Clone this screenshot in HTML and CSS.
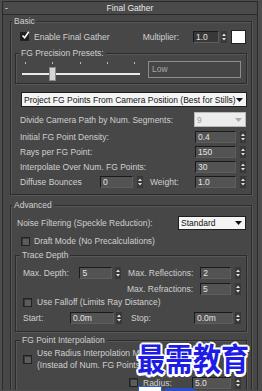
FILE: index.html
```html
<!DOCTYPE html>
<html lang="en">
<head>
    <meta charset="UTF-8">
    <title>Final Gather</title>
    <meta name="viewport" content="width=device-width, initial-scale=1.0">
    <link rel="stylesheet" href="styles.css">
</head>
<body>
    <div class="rollout">
        <div class="title"><span class="toggle">-</span><span>Final Gather</span><span></span></div>

        <fieldset class="group basic">
            <legend>Basic</legend>
            <div class="row enable-row">
                <span class="check checked"><svg viewBox="0 0 9 9"><path d="M1.5 4.5 3.6 6.8 7.8 0.8" fill="none" stroke="#fff" stroke-width="1.6"/></svg></span>
                <span class="check-text">Enable Final Gather</span>
                <span class="mult-label">Multiplier:</span>
                <span class="field mult">1.0</span>
                <svg class="arrows" viewBox="0 0 6 12"><rect width="6" height="12" fill="#383838"/><path d="M1 5h4L3 2.5z M1 7h4L3 9.5z" fill="#e0e0e0"/></svg>
                <span class="swatch"></span>
            </div>

            <fieldset class="group presets">
                <legend>FG Precision Presets:</legend>
                <div class="preset-row">
                    <div class="slider">
                        <div class="ticks"><i></i><i></i><i></i><i></i><i></i></div>
                        <div class="track"></div>
                        <div class="thumb"></div>
                    </div>
                    <div class="preset-name">Low</div>
                </div>
            </fieldset>

            <div class="select wide">
                <span>Project FG Points From Camera Position (Best for Stills)</span>
                <svg class="caret" viewBox="0 0 7 4"><path d="M0 0h7L3.5 4z" fill="#111"/></svg>
            </div>

            <div class="row divide-row">
                <span class="label">Divide Camera Path by Num. Segments:</span>
                <div class="select disabled">
                    <span>9</span>
                    <svg class="caret" viewBox="0 0 7 4"><path d="M0 0h7L3.5 4z" fill="#aaa"/></svg>
                </div>
            </div>

            <div class="row num-row first">
                <span class="label">Initial FG Point Density:</span>
                <span class="field num">0.4</span>
                <svg class="arrows" viewBox="0 0 6 12"><rect width="6" height="12" fill="#383838"/><path d="M1 5h4L3 2.5z M1 7h4L3 9.5z" fill="#e0e0e0"/></svg>
            </div>
            <div class="row num-row">
                <span class="label">Rays per FG Point:</span>
                <span class="field num">150</span>
                <svg class="arrows" viewBox="0 0 6 12"><rect width="6" height="12" fill="#383838"/><path d="M1 5h4L3 2.5z M1 7h4L3 9.5z" fill="#e0e0e0"/></svg>
            </div>
            <div class="row num-row">
                <span class="label">Interpolate Over Num. FG Points:</span>
                <span class="field num">30</span>
                <svg class="arrows" viewBox="0 0 6 12"><rect width="6" height="12" fill="#383838"/><path d="M1 5h4L3 2.5z M1 7h4L3 9.5z" fill="#e0e0e0"/></svg>
            </div>
            <div class="row num-row">
                <span class="label bounces">Diffuse Bounces</span>
                <span class="field small">0</span>
                <svg class="arrows" viewBox="0 0 6 12"><rect width="6" height="12" fill="#383838"/><path d="M1 5h4L3 2.5z M1 7h4L3 9.5z" fill="#e0e0e0"/></svg>
                <span class="label weight">Weight:</span>
                <span class="field num">1.0</span>
                <svg class="arrows" viewBox="0 0 6 12"><rect width="6" height="12" fill="#383838"/><path d="M1 5h4L3 2.5z M1 7h4L3 9.5z" fill="#e0e0e0"/></svg>
            </div>
        </fieldset>

        <fieldset class="group advanced">
            <legend>Advanced</legend>
            <div class="row noise-row">
                <span class="label">Noise Filtering (Speckle Reduction):</span>
                <div class="select noise">
                    <span>Standard</span>
                    <svg class="caret" viewBox="0 0 7 4"><path d="M0 0h7L3.5 4z" fill="#111"/></svg>
                </div>
            </div>
            <div class="row draft-row">
                <span class="check"></span>
                <span class="check-text">Draft Mode (No Precalculations)</span>
            </div>

            <fieldset class="group inner trace">
                <legend>Trace Depth</legend>
                <div class="row depth-row">
                    <span class="label depth-label">Max. Depth:</span>
                    <span class="field depth">5</span>
                    <svg class="arrows" viewBox="0 0 6 12"><rect width="6" height="12" fill="#383838"/><path d="M1 5h4L3 2.5z M1 7h4L3 9.5z" fill="#e0e0e0"/></svg>
                    <span class="label refl-label">Max. Reflections:</span>
                    <span class="field refl">2</span>
                    <svg class="arrows" viewBox="0 0 6 12"><rect width="6" height="12" fill="#383838"/><path d="M1 5h4L3 2.5z M1 7h4L3 9.5z" fill="#e0e0e0"/></svg>
                </div>
                <div class="row depth-row second">
                    <span class="label refl-label">Max. Refractions:</span>
                    <span class="field refl">5</span>
                    <svg class="arrows" viewBox="0 0 6 12"><rect width="6" height="12" fill="#383838"/><path d="M1 5h4L3 2.5z M1 7h4L3 9.5z" fill="#e0e0e0"/></svg>
                </div>
                <div class="row falloff-row">
                    <span class="check"></span>
                    <span class="check-text">Use Falloff (Limits Ray Distance)</span>
                </div>
                <div class="row start-row">
                    <span class="label start-label">Start:</span>
                    <span class="field start">0.0m</span>
                    <svg class="arrows" viewBox="0 0 6 12"><rect width="6" height="12" fill="#383838"/><path d="M1 5h4L3 2.5z M1 7h4L3 9.5z" fill="#e0e0e0"/></svg>
                    <span class="label stop-label">Stop:</span>
                    <span class="field stop">0.0m</span>
                    <svg class="arrows" viewBox="0 0 6 12"><rect width="6" height="12" fill="#383838"/><path d="M1 5h4L3 2.5z M1 7h4L3 9.5z" fill="#e0e0e0"/></svg>
                </div>
            </fieldset>

            <fieldset class="group inner interp">
                <legend>FG Point Interpolation</legend>
                <div class="row radius-method">
                    <span class="check"></span>
                    <span class="check-text two-line">Use Radius Interpolation Method<br>(Instead of Num. FG Points)</span>
                </div>
                <div class="row radius-row">
                    <span class="check"></span>
                    <span class="check-text">Radius:</span>
                    <span class="field stop">5.0</span>
                    <svg class="arrows" viewBox="0 0 6 12"><rect width="6" height="12" fill="#383838"/><path d="M1 5h4L3 2.5z M1 7h4L3 9.5z" fill="#e0e0e0"/></svg>
                </div>
            </fieldset>
        </fieldset>
    </div>

    <!-- watermark over the panel -->
    <div class="watermark">最需教育</div>
    <div class="watermark-foot"><span class="foot-box"></span><span class="foot-bar"></span></div>
</body>
</html>
```

FILE: styles.css
```css
body {
    margin: 0;
    height: 391px;
    overflow: hidden;
    position: relative;
    background: #4d4d4d;
    font-family: 'Liberation Sans', Arial, sans-serif;
    font-size: 8.5px;
    color: #d0d0d0;
}
.rollout {
    margin: 1px 0 0 2px;
    width: 254px;
    height: 388px;
    overflow: hidden;
    border: 1px solid #2a2a2a;
    border-bottom: none;
    background: #474747;
}
.title {
    display: grid;
    grid-template-columns: 10px 1fr 10px;
    height: 12px;
    line-height: 12px;
    border-bottom: 1px solid #2a2a2a;
    background: #4a4a4a;
    text-align: center;
    color: #e8e8e8;
}
.toggle {
    text-align: left;
    padding-left: 2px;
}
/* group boxes */
fieldset.group {
    min-width: 0;
    margin: 1px 5px 0 7px;
    padding: 0 4px 6px 4px;
    border: 1px solid #2c2c2c;
    box-shadow: inset 1px 1px 0 #575757, 1px 1px 0 #575757;
}
fieldset.group legend {
    height: 10px;
    line-height: 10px;
    padding: 0 2px;
    margin-left: -3px;
    background: #474747;
}
fieldset.advanced {
    margin-top: 5px;
    padding-bottom: 20px;
}
fieldset.presets {
    margin: 5px 0 0 0;
    padding: 2px 5px 0 6px;
}
fieldset.inner {
    margin: 4px 0 0 0;
    padding: 0 5px 7px 7px;
}
fieldset.interp {
    margin-top: 3px;
}
.row {
    display: flex;
    align-items: center;
    padding: 0 1px 0 5px;
}
.label {
    white-space: nowrap;
}
.check {
    width: 7px;
    height: 7px;
    flex: none;
    border: 1px solid #222;
    background: #5c5c5c;
    box-shadow: inset 1px 1px 0 #3a3a3a;
}
.check.checked {
    background: #1c1c1c;
    box-shadow: none;
}
.check svg {
    display: block;
    width: 9px;
    height: 9px;
    margin: -2px 0 0 0;
}
.check-text {
    margin-left: 5px;
    white-space: nowrap;
}
.field {
    height: 10px;
    line-height: 10px;
    padding-left: 2px;
    border-top: 1px solid #1a1a1a;
    border-left: 1px solid #1a1a1a;
    border-bottom: 1px solid #5e5e5e;
    border-right: 1px solid #5e5e5e;
    background: #535353;
    color: #e4e4e4;
    box-sizing: content-box;
}
.arrows {
    width: 6px;
    height: 12px;
    flex: none;
    margin-left: 4px;
}
/* basic section */
.enable-row {
    margin-top: 4px;
    height: 13px;
}
.mult-label {
    margin-left: auto;
}
.field.mult {
    width: 22px;
    margin-left: 14px;
    background: #383838;
}
.enable-row .arrows {
    margin-left: 2px;
}
.swatch {
    width: 13px;
    height: 12px;
    margin-left: 4px;
    background: #fff;
    border: 1px solid #222;
}
.preset-row {
    display: flex;
    height: 23px;
}
.slider {
    position: relative;
    width: 118px;
    flex: none;
}
.ticks {
    display: flex;
    justify-content: space-between;
    margin-top: 2px;
    padding: 0 5px 0 3px;
    height: 2px;
}
.ticks i {
    width: 1px;
    height: 2px;
    background: #bdbdbd;
}
.track {
    margin-top: 9px;
    height: 2px;
    background: #eaeaea;
}
.thumb {
    position: absolute;
    left: 27px;
    top: 7px;
    width: 5px;
    height: 12px;
    background: #d6d6d6;
    border: 1px solid #8a8a8a;
}
.preset-name {
    width: 90px;
    height: 15px;
    line-height: 15px;
    margin: 1px 0 0 8px;
    padding-left: 3px;
    border: 1px solid #8c8c8c;
    background: #464646;
    color: #a8a8a8;
}
.select {
    display: flex;
    align-items: center;
    justify-content: space-between;
    border: 1px solid #1e1e1e;
    background: #f4f4f4;
    color: #111;
    padding: 0 3px 0 2px;
    white-space: nowrap;
}
.select.wide {
    height: 13px;
    margin: 8px 0 0 6px;
}
.caret {
    width: 7px;
    height: 4px;
    flex: none;
}
.divide-row {
    margin-top: 5px;
    height: 15px;
    justify-content: space-between;
}
.select.disabled {
    width: 45px;
    height: 13px;
    border-color: #b9b9b9;
    background: #ececec;
    color: #9a9a9a;
}
.num-row {
    height: 12px;
    margin-top: 3px;
}
.num-row.first {
    margin-top: 4px;
}
.num-row .field.num {
    width: 37px;
    margin-left: auto;
}
.label.bounces {
    width: 80px;
}
.field.small {
    width: 29px;
}
.label.weight {
    margin-left: 7px;
}
/* advanced section */
.noise-row {
    margin-top: 6px;
    height: 14px;
    padding-left: 2px;
    justify-content: space-between;
}
.select.noise {
    width: 61px;
    height: 12px;
}
.draft-row {
    margin-top: 6px;
    height: 10px;
    padding-left: 6px;
}
.draft-row .check-text {
    margin-left: 4px;
}
.inner .row {
    padding: 0;
}
.depth-row {
    height: 12px;
    margin-top: 7px;
}
.depth-row.second {
    margin-top: 4px;
    justify-content: flex-end;
}
.depth-label {
    width: 57px;
}
.field.depth {
    width: 29px;
}
.depth-row .arrows {
    margin-left: 3px;
}
.refl-label {
    margin-left: 7px;
    width: 73px;
}
.depth-row .field.refl {
    width: 27px;
}
.depth-row .field.refl + .arrows {
    margin-left: 4px;
}
.falloff-row {
    margin-top: 2px;
    height: 10px;
}
.start-row {
    margin-top: 5px;
    height: 12px;
}
.start-label {
    width: 47px;
}
.field.start {
    width: 40px;
}
.start-row .arrows {
    margin-left: 2px;
}
.stop-label {
    margin-left: 9px;
}
.field.stop {
    width: 35px;
    margin-left: auto;
}
.radius-method {
    margin-top: 2px;
}
.check-text.two-line {
    line-height: 12px;
}
.radius-row {
    margin-top: 6px;
    height: 11px;
}
.inner .radius-row {
    padding-left: 106px;
}
/* watermark over the panel */
.watermark {
    position: absolute;
    left: 137px;
    top: 339px;
    font-family: 'Noto Sans CJK SC', sans-serif;
    font-weight: 700;
    font-size: 28px;
    line-height: 38px;
    color: #1d1de6;
    transform: scaleY(1.12);
    text-shadow: 2px 0 0 #fff, -2px 0 0 #fff, 0 2px 0 #fff, 0 -2px 0 #fff,
        1.5px 1.5px 0 #fff, -1.5px 1.5px 0 #fff, 1.5px -1.5px 0 #fff, -1.5px -1.5px 0 #fff;
}
.watermark-foot {
    position: absolute;
    left: 138px;
    top: 386px;
    display: flex;
    gap: 3px;
}
.foot-box {
    width: 22px;
    height: 4px;
    background: #fff;
    border: 1px solid #2a5fd0;
    border-bottom: none;
}
.foot-bar {
    width: 30px;
    height: 3px;
    margin-top: 2px;
    background: #2a4fc8;
}
```
